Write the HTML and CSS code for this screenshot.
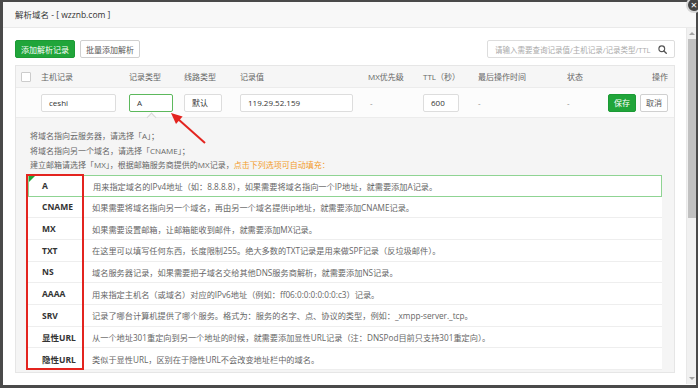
FILE: index.html
```html
<!DOCTYPE html>
<html lang="zh-CN">
<head>
  <meta charset="UTF-8">
  <meta name="viewport" content="width=device-width, initial-scale=1.0">
  <title>解析域名</title>
  <link rel="stylesheet" href="styles.css">
</head>
<body>
  <div class="modal">
    <div class="modal-head">解析域名 - [ wzznb.com ]</div>
    <span class="close">×</span>

    <div class="modal-body">
      <div class="main">
        <div class="toolbar">
          <button class="btn btn-green">添加解析记录</button>
          <button class="btn btn-white">批量添加解析</button>
          <div class="search">
            <span class="search-text">请输入需要查询记录值/主机记录/记录类型/TTL</span>
            <svg class="search-icon" width="9" height="9" viewBox="0 0 10 10">
              <circle cx="4.2" cy="4.2" r="3.2" fill="none" stroke="#555" stroke-width="1.3"/>
              <line x1="6.6" y1="6.6" x2="9.2" y2="9.2" stroke="#555" stroke-width="1.5" stroke-linecap="round"/>
            </svg>
          </div>
        </div>

        <div class="table">
          <div class="row row-head">
            <span><i class="checkbox"></i></span>
            <span>主机记录</span>
            <span>记录类型</span>
            <span>线路类型</span>
            <span>记录值</span>
            <span class="mx">MX优先级</span>
            <span>TTL（秒）</span>
            <span>最后操作时间</span>
            <span>状态</span>
            <span class="right">操作</span>
          </div>
          <div class="row row-edit">
            <span></span>
            <span><span class="ipt w-host">ceshi</span></span>
            <span><span class="ipt ipt-on w-type">A</span></span>
            <span><span class="ipt w-line">默认</span></span>
            <span><span class="ipt w-value">119.29.52.159</span></span>
            <span class="mx dash">-</span>
            <span><span class="ipt w-ttl">600</span></span>
            <span class="dash">-</span>
            <span class="dash">-</span>
            <span class="right ops">
              <button class="btn btn-green btn-sm">保存</button>
              <button class="btn btn-white btn-sm">取消</button>
            </span>
          </div>

          <div class="tips">
            <i class="caret"></i>
            <p>将域名指向云服务器，请选择「A」；</p>
            <p>将域名指向另一个域名，请选择「CNAME」；</p>
            <p>建立邮箱请选择「MX」，根据邮箱服务商提供的MX记录，<span class="orange">点击下列选项可自动填充：</span></p>

            <div class="types">
              <div class="type active"><b>A</b><span>用来指定域名的IPv4地址（如：8.8.8.8），如果需要将域名指向一个IP地址，就需要添加A记录。</span></div>
              <div class="type"><b>CNAME</b><span>如果需要将域名指向另一个域名，再由另一个域名提供ip地址，就需要添加CNAME记录。</span></div>
              <div class="type"><b>MX</b><span>如果需要设置邮箱，让邮箱能收到邮件，就需要添加MX记录。</span></div>
              <div class="type"><b>TXT</b><span>在这里可以填写任何东西，长度限制255。绝大多数的TXT记录是用来做SPF记录（反垃圾邮件）。</span></div>
              <div class="type"><b>NS</b><span>域名服务器记录，如果需要把子域名交给其他DNS服务商解析，就需要添加NS记录。</span></div>
              <div class="type"><b>AAAA</b><span>用来指定主机名（或域名）对应的IPv6地址（例如：ff06:0:0:0:0:0:0:c3）记录。</span></div>
              <div class="type"><b>SRV</b><span>记录了哪台计算机提供了哪个服务。格式为：服务的名字、点、协议的类型，例如：_xmpp-server._tcp。</span></div>
              <div class="type"><b>显性URL</b><span>从一个地址301重定向到另一个地址的时候，就需要添加显性URL记录（注：DNSPod目前只支持301重定向）。</span></div>
              <div class="type"><b>隐性URL</b><span>类似于显性URL，区别在于隐性URL不会改变地址栏中的域名。</span></div>
              <div class="mark"></div>
            </div>
          </div>
        </div>
      </div>

      <div class="scrollbar">
        <i class="arrow-up"></i>
        <div class="thumb"></div>
        <i class="arrow-down"></i>
      </div>
    </div>

    <!-- 标注箭头，坐标按整页算 -->
    <svg class="pointer" width="698" height="388" viewBox="0 0 698 388">
      <line x1="205" y1="143" x2="178" y2="119" stroke="#e3241f" stroke-width="2"/>
      <polygon points="171,113 182.6,116.5 176,124" fill="#e3241f"/>
    </svg>
  </div>
</body>
</html>
```

FILE: styles.css
```css
* {
  margin: 0;
  padding: 0;
  box-sizing: border-box;
}

body {
  width: 698px;
  height: 388px;
  overflow: hidden;
  background-color: #4a4a4a;
  font-family: "Open Sans", "Noto Sans CJK SC", sans-serif;
  font-size: 8px;
  color: #555;
}

.modal {
  position: relative;
  margin: 2px 2px 0 3px;
  height: 383px;
  background-color: #fff;
}

.modal-head {
  height: 26px;
  line-height: 26px;
  padding-left: 12px;
  font-size: 8.5px;
  color: #333;
  background-color: #f8f8f8;
  border-bottom: 1px solid #eaeaea;
}

.close {
  position: absolute;
  top: -5px;
  right: -6px;
  width: 16px;
  height: 16px;
  line-height: 11px;
  text-align: center;
  font-size: 11px;
  color: #fff;
  background-color: #444;
  border: 2px solid #d6d6d6;
  border-radius: 50%;
}

.modal-body {
  display: flex;
  height: 356px;
}

.main {
  flex: 1;
  padding: 12px 11px 0 12px;
  overflow: hidden;
}

.toolbar {
  display: flex;
  align-items: center;
  gap: 5px;
  height: 18px;
}

.btn {
  height: 18px;
  padding: 0 5px;
  font-family: inherit;
  font-size: 8px;
  border-radius: 2px;
  cursor: pointer;
}

.btn-green {
  color: #fff;
  background-color: #20a53a;
  border: 1px solid #1c9a35;
}

.btn-white {
  color: #555;
  background-color: #fff;
  border: 1px solid #d0d0d0;
}

.btn-sm {
  height: 18px;
  padding: 0 5px;
}

.search {
  display: flex;
  align-items: center;
  justify-content: space-between;
  margin-left: auto;
  width: 188px;
  height: 18px;
  padding: 0 7px;
  border: 1px solid #ddd;
  border-radius: 2px;
}

.search-text {
  font-size: 7.5px;
  color: #aaa;
}

.table {
  margin-top: 7px;
  border: 1px solid #e6e6e6;
}

.row {
  display: grid;
  grid-template-columns: 20px 88px 55px 56px 127px 56px 55px 89px 40px 1fr;
  align-items: center;
  padding: 0 6px 0 5px;
  white-space: nowrap;
}

.row-head {
  height: 22px;
  color: #666;
  background-color: #f6f6f6;
  border-bottom: 1px solid #ececec;
}

.row-edit {
  height: 30px;
  color: #666;
  background-color: #fcfcfc;
  border-bottom: 1px solid #ececec;
}

.mx {
  padding-left: 1px;
}

.dash {
  color: #888;
}

.mx.dash {
  padding-left: 3px;
}

.right {
  text-align: right;
}

.ops {
  display: flex;
  justify-content: flex-end;
  gap: 4px;
}

.checkbox {
  display: block;
  width: 10px;
  height: 10px;
  background-color: #fff;
  border: 1px solid #ccc;
  border-radius: 1px;
}

.ipt {
  display: block;
  height: 18px;
  line-height: 16px;
  padding: 0 7px;
  color: #333;
  background-color: #fff;
  border: 1px solid #ddd;
  border-radius: 2px;
}

.ipt-on {
  border-color: #5cb85c;
}

.w-host { width: 75px; }
.w-type { width: 44px; }
.w-line { width: 38px; }
.w-value { width: 113px; }
.w-ttl { width: 36px; }

.tips {
  position: relative;
  padding: 11px 12px 2px 12px;
  background-color: #f5f5f5;
}

.tips p {
  height: 14.5px;
  line-height: 14.5px;
  padding-left: 2px;
  color: #666;
}

.orange {
  color: #f39b2b;
}

.caret {
  position: absolute;
  top: -4px;
  left: 132px;
  width: 7px;
  height: 7px;
  background-color: #f5f5f5;
  border-top: 1px solid #d8d8d8;
  border-left: 1px solid #d8d8d8;
  transform: rotate(45deg);
}

.types {
  position: relative;
  margin-top: 2.5px;
  background-color: #fff;
}

.type {
  position: relative;
  display: flex;
  align-items: center;
  height: 21.67px;
  border-bottom: 1px solid #eee;
  white-space: nowrap;
}

.type b {
  width: 64px;
  padding-left: 14px;
  font-size: 8.5px;
  color: #333;
}

.type span {
  font-size: 8.2px;
  color: #666;
}

.type.active {
  border: 1px solid #8fd493;
}

.type.active b {
  padding-left: 13px;
}

.type.active::before {
  content: "";
  position: absolute;
  top: 0;
  left: 0;
  border-top: 6px solid #20a53a;
  border-right: 6px solid transparent;
}

.mark {
  position: absolute;
  top: -1px;
  left: -2px;
  width: 58px;
  height: calc(100% + 1px);
  border: 2px solid #e3241f;
}

.scrollbar {
  display: flex;
  flex-direction: column;
  align-items: center;
  width: 10px;
  background-color: #f1f1f1;
  border-left: 1px solid #e8e8e8;
}

.arrow-up,
.arrow-down {
  display: block;
  width: 0;
  height: 0;
  border-left: 3px solid transparent;
  border-right: 3px solid transparent;
}

.arrow-up {
  margin: 4px 0 4px;
  border-bottom: 3px solid #a3a3a3;
}

.arrow-down {
  margin: auto 0 4px;
  border-top: 3px solid #a3a3a3;
}

.thumb {
  width: 8px;
  height: 179px;
  background-color: #c1c1c1;
}

.pointer {
  position: absolute;
  top: -2px;
  left: -3px;
  pointer-events: none;
}
```
